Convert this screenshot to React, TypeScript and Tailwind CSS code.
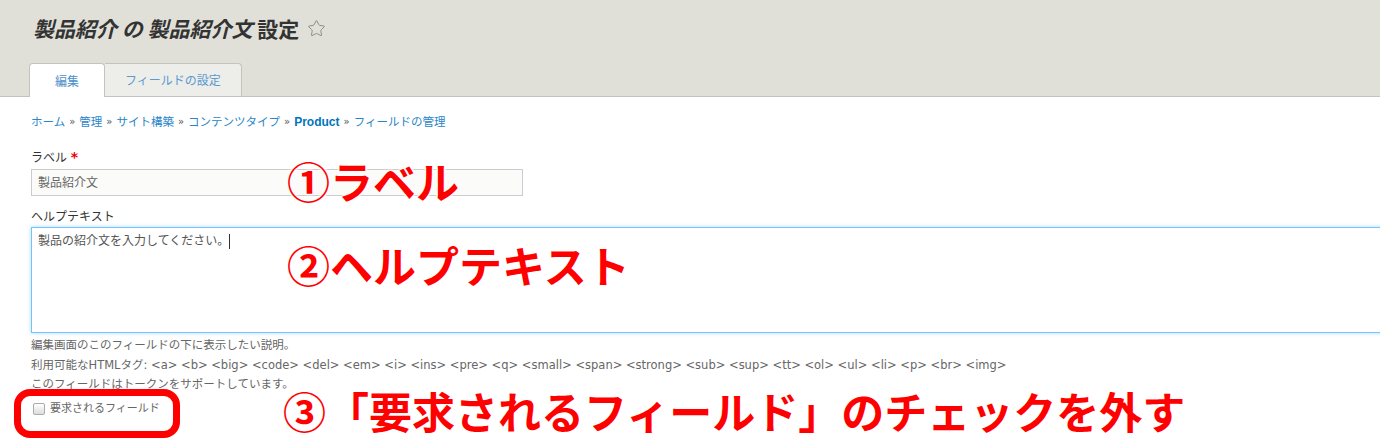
import { Star } from 'lucide-react'

const ui = { fontFamily: '"DejaVu Sans", "Noto Sans CJK JP", sans-serif' }
const jp = { fontFamily: '"Noto Sans CJK JP", sans-serif' }

const crumbs = ['ホーム', '管理', 'サイト構築', 'コンテンツタイプ', 'Product', 'フィールドの管理']

const tags =
  '<a> <b> <big> <code> <del> <em> <i> <ins> <pre> <q> <small> <span> <strong> <sub> <sup> <tt> <ol> <ul> <li> <p> <br> <img>'

function Note({ text, className }: { text: string; className: string }) {
  return (
    <div
      style={jp}
      className={`absolute whitespace-nowrap text-[43px] leading-none font-bold text-[#ff0000] [text-shadow:0_0_3px_#fff,0_0_3px_#fff,0_0_3px_#fff,0_0_3px_#fff] ${className}`}
    >
      {text}
    </div>
  )
}

export default function App() {
  return (
    <div style={ui} className="relative w-[1380px] h-[440px] overflow-hidden bg-white">
      {/* header */}
      <div className="h-[97px] bg-[#e0e0d8] border-b border-[#c4c4bc] flex flex-col">
        <h1 className="pl-[33px] pt-[13px] flex items-center gap-[8px] text-[21px] leading-[30px] font-bold text-[#333]" style={jp}>
          <span>
            <em className="italic">製品紹介 の 製品紹介文</em> 設定
          </span>
          <Star size={19} strokeWidth={1.2} className="text-[#8a8a80]" />
        </h1>
        <div className="mt-auto ml-[29px] flex text-[12px] text-[#4a90c8]" style={jp}>
          <div className="w-[76px] h-[34px] -mb-px bg-white border border-b-0 border-[#c4c4bc] rounded-t-[4px] flex items-center justify-center">
            編集
          </div>
          <div className="w-[137px] h-[33px] bg-[#ededea] border border-l-0 border-b-0 border-[#c4c4bc] rounded-tr-[4px] flex items-center justify-center text-[#5a9ad0]">
            フィールドの設定
          </div>
        </div>
      </div>

      {/* body */}
      <div className="pl-[31px] pt-[17px]">
        <nav className="flex items-center text-[11.5px] leading-[16px] text-[#666]">
          {crumbs.map((c, i) => (
            <span key={c} className="flex items-center">
              {i > 0 && <span className="mx-[4px] text-[10px] text-[#555]">»</span>}
              {c === 'Product' ? (
                <span className="text-[#0074bd] font-bold text-[12px]" style={{ fontFamily: '"Liberation Sans", sans-serif' }}>
                  {c}
                </span>
              ) : (
                <span className="text-[#2a86c8]">{c}</span>
              )}
            </span>
          ))}
        </nav>

        <div className="mt-[19px] text-[12px] leading-[16px] text-[#333]">
          ラベル <span className="text-[#e00] font-bold text-[14px]">*</span>
        </div>
        <div className="mt-[3px] w-[492px] h-[27px] bg-[#fbfbf9] border border-[#ccc] px-[6px] flex items-center text-[12px] text-[#666]">
          製品紹介文
        </div>

        <div className="mt-[13px] text-[12px] leading-[16px] text-[#333]">ヘルプテキスト</div>
        <div className="mt-[2px] w-[1400px] h-[106px] bg-white border border-[#78c2f5] shadow-[0_0_4px_#a9dafc] px-[6px] py-[5px] text-[12px] leading-[16px] text-[#555]">
          製品の紹介文を入力してください。<span className="inline-block w-px h-[15px] bg-[#333] align-middle" />
        </div>

        <div className="mt-[3px] text-[11.5px] leading-[19.5px] text-[#666]">
          <div>編集画面のこのフィールドの下に表示したい説明。</div>
          <div>利用可能なHTMLタグ: {tags}</div>
          <div>このフィールドはトークンをサポートしています。</div>
        </div>

        <label className="mt-[6px] flex items-center gap-[5px] text-[11px] text-[#666]">
          <span className="ml-[2px] w-[12px] h-[12px] rounded-[2px] border border-[#aaa] bg-gradient-to-b from-[#fff] to-[#ddd]" />
          要求されるフィールド
        </label>
      </div>

      {/* red highlight around checkbox */}
      <div className="absolute left-[14px] top-[389px] w-[166px] h-[49px] rounded-[16px] border-[7px] border-[#ff0000]" />

      <Note text="①ラベル" className="left-[287px] top-[159px]" />
      <Note text="②ヘルプテキスト" className="left-[287px] top-[243px]" />
      <Note text="③「要求されるフィールド」のチェックを外す" className="left-[283px] top-[389px]" />
    </div>
  )
}
